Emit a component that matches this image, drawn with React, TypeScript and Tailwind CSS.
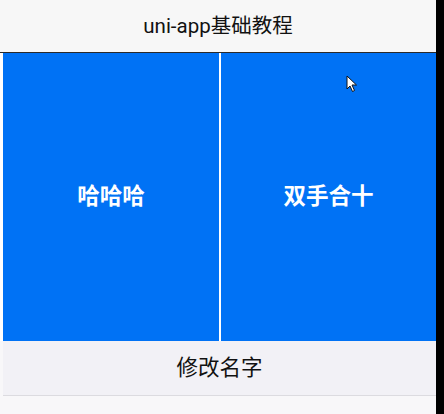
export default function App() {
  return (
    <div
      className="relative flex h-[414px] w-[444px] bg-black"
      style={{ fontFamily: '"Roboto", "Noto Sans CJK SC", sans-serif' }}
    >
      <div className="flex w-[436px] flex-col bg-[#f8f7f9]">
        <div className="flex h-[53px] items-center justify-center border-b border-[#2a2a2a] bg-[#f7f7f7] pt-[1px] text-[20.5px] text-[#111]">
          uni-app基础教程
        </div>
        <div className="flex h-[288px] gap-[2px] bg-white pl-[3px]">
          <div className="flex w-[216px] items-center justify-center bg-[#0072f5] text-[22.5px] font-bold text-white">
            哈哈哈
          </div>
          <div className="flex flex-1 items-center justify-center bg-[#0072f5] text-[22.5px] font-bold text-white">
            双手合十
          </div>
        </div>
        <button className="ml-[3px] flex h-[55px] items-center justify-center border-b border-[#dcdbe0] bg-[#f2f1f6] text-[21.5px] text-[#111]">
          修改名字
        </button>
      </div>
      <svg
        className="absolute left-[346px] top-[75px]"
        width="12"
        height="18"
        viewBox="0 0 12 18"
      >
        <path d="M1 1 L1 14 L4 11 L6.5 16.5 L8.5 15.5 L6 10 L10.5 10 Z" fill="#fff" stroke="#111" strokeWidth="1" strokeLinejoin="round" />
      </svg>
    </div>
  );
}
